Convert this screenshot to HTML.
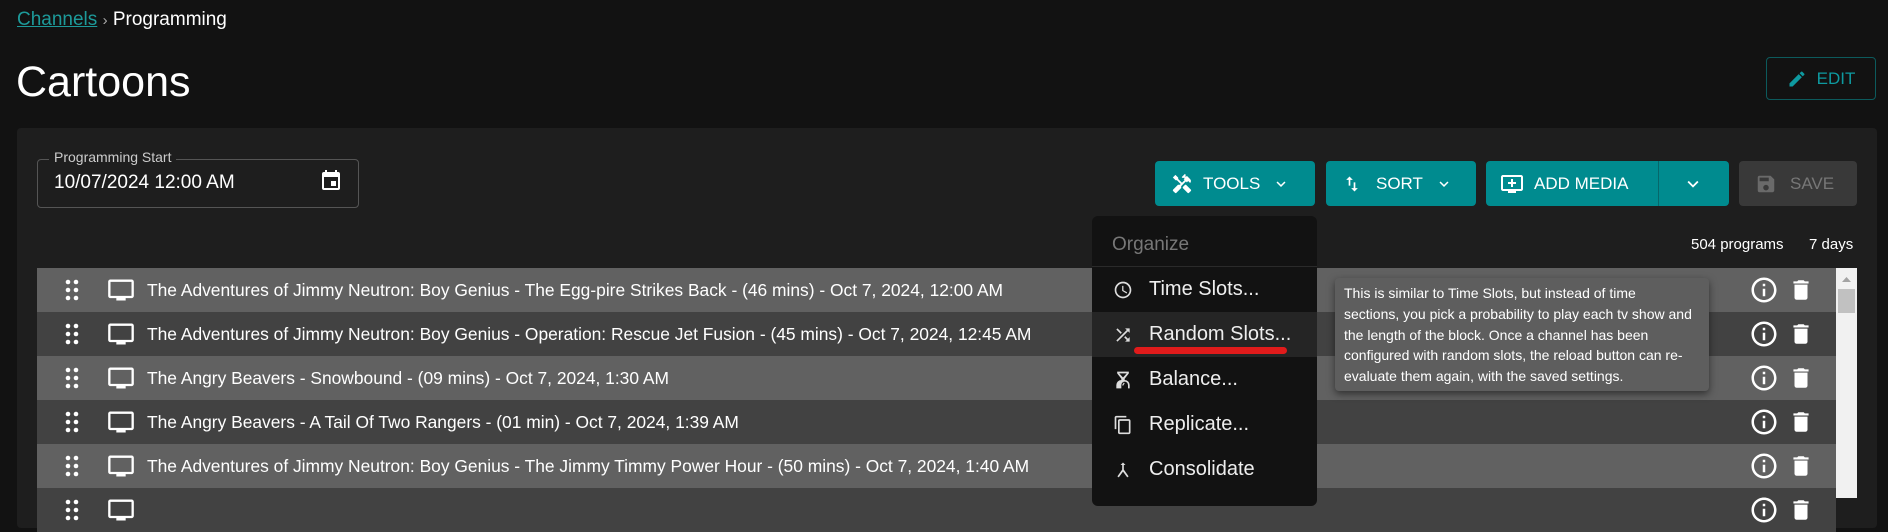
<!DOCTYPE html>
<html><head><meta charset="utf-8"><style>
*{box-sizing:border-box;margin:0;padding:0}
body{width:1888px;height:498px;background:#121212;font-family:"Liberation Sans",Arial,sans-serif;color:#fff;position:relative;overflow:hidden}
.abs{position:absolute}
.crumb{left:17px;top:9px;font-size:19px}
.crumb a{color:#1d9a9a;text-decoration:underline}
.title{left:16px;top:58px;font-size:43px}
.edit{left:1766px;top:57px;width:110px;height:43px;border:1px solid #0c5a5c;border-radius:4px;color:#0e9aa0;font-size:17px;display:flex;align-items:center;justify-content:center;gap:10px}
.panel{left:17px;top:128px;width:1860px;height:400px;background:#1e1e1e;border-radius:4px}
.field{left:37px;top:159px;width:322px;height:49px;border:1px solid #555;border-radius:4px}
.flabel{left:49px;top:149px;font-size:14px;color:#ccc;background:#1e1e1e;padding:0 5px}
.fval{left:54px;top:172px;font-size:19px}
.btn{top:161px;height:45px;background:#008b8f;border-radius:4px;display:flex;align-items:center;font-size:17px;font-weight:normal;color:#fff}
.row{left:37px;width:1799px;height:44px;display:flex;align-items:center;font-size:17.4px}
.l{background:#616161}.d{background:#424242}
.menu{left:1092px;top:216px;width:225px;height:290px;background:#121212;border-radius:6px}
.mi{position:absolute;left:0;width:225px;height:45px;display:flex;align-items:center;font-size:20px;color:#eee}
.mi svg{position:absolute;left:21px}
.mi span{position:absolute;left:57px}
.tip{left:1335px;top:278px;width:374px;height:113px;background:#5e5e5e;border-radius:4px;box-shadow:0 3px 8px rgba(0,0,0,.5);font-size:14px;line-height:20.8px;padding:5px 6px 0 9px;color:#fff;white-space:nowrap}
</style></head><body>
<div class="abs crumb"><a>Channels</a> <span style="color:#aaa;font-size:15px">›</span> Programming</div>
<div class="abs title">Cartoons</div>
<div class="abs edit"><svg width="20" height="20" viewBox="0 0 24 24"><path fill="#0e9aa0" d="M3 17.25V21h3.75L17.81 9.94l-3.75-3.75L3 17.25zM20.71 7.04a1 1 0 000-1.41l-2.34-2.34a1 1 0 00-1.41 0l-1.83 1.83 3.75 3.75 1.83-1.83z"/></svg>EDIT</div>
<div class="abs panel"></div>
<div class="abs field"></div>
<div class="abs flabel">Programming Start</div>
<div class="abs fval">10/07/2024 12:00 AM</div>
<svg class="abs" style="left:319px;top:169px" width="24" height="24" viewBox="0 0 24 24"><path fill="#fff" d="M17 12h-5v5h5v-5zM16 1v2H8V1H6v2H5a2 2 0 00-2 2v14a2 2 0 002 2h14a2 2 0 002-2V5a2 2 0 00-2-2h-1V1h-2zm3 18H5V8h14v11z"/></svg>

<div class="abs btn" style="left:1155px;width:160px"><svg style="margin-left:16px" width="22" height="22" viewBox="0 0 24 24"><path fill="#fff" d="M21.67 18.17l-5.3-5.3h-.99l-2.54 2.54v.99l5.3 5.3c.39.39 1.02.39 1.41 0l2.12-2.12c.39-.38.39-1.02 0-1.41zM17.34 10.19l1.41-1.41 2.12 2.12a3 3 0 000-4.24l-3.54-3.54-1.41 1.41V1.71l-.7-.71-3.54 3.54.71.71h2.83l-1.41 1.41 1.06 1.06-2.89 2.89-4.13-4.13V5.06L4.83 2.04 2 4.87 5.03 7.9h1.41l4.13 4.13-.85.85H7.6l-5.3 5.3a1 1 0 000 1.41l2.12 2.12c.39.39 1.02.39 1.41 0l5.3-5.3v-2.12l5.15-5.15 1.06 1.05z"/></svg><span style="margin-left:10px">TOOLS</span><svg style="margin-left:12px" width="18" height="18" viewBox="0 0 24 24"><path fill="#fff" d="M7.41 8.59L12 13.17l4.59-4.58L18 10l-6 6-6-6z"/></svg></div>
<div class="abs btn" style="left:1326px;width:150px"><svg style="margin-left:16px" width="20" height="22" viewBox="0 0 24 24"><path fill="#fff" d="M16 17.01V10h-2v7.01h-3L15 21l4-3.99h-3zM9 3L5 6.99h3V14h2V6.99h3L9 3z"/></svg><span style="margin-left:14px">SORT</span><svg style="margin-left:12px" width="18" height="18" viewBox="0 0 24 24"><path fill="#fff" d="M7.41 8.59L12 13.17l4.59-4.58L18 10l-6 6-6-6z"/></svg></div>
<div class="abs btn" style="left:1486px;width:243px"><svg style="margin-left:14px" width="24" height="24" viewBox="0 0 24 24"><path fill="#fff" d="M21 3H3c-1.1 0-2 .9-2 2v12c0 1.1.9 2 2 2h5v2h8v-2h5c1.1 0 2-.9 2-2V5c0-1.1-.9-2-2-2zm0 14H3V5h18v12zm-5-7v2h-3v3h-2v-3H8v-2h3V7h2v3h3z"/></svg><span style="margin-left:10px">ADD MEDIA</span><div style="position:absolute;left:172px;top:0;width:1px;height:45px;background:#06676a"></div><svg style="position:absolute;left:196px" width="22" height="22" viewBox="0 0 24 24"><path fill="#fff" d="M7.41 8.59L12 13.17l4.59-4.58L18 10l-6 6-6-6z"/></svg></div>
<div class="abs btn" style="left:1739px;width:118px;background:#393939;color:#777"><svg style="margin-left:16px" width="22" height="22" viewBox="0 0 24 24"><path fill="#6a6a6a" d="M17 3H5a2 2 0 00-2 2v14a2 2 0 002 2h14c1.1 0 2-.9 2-2V7l-4-4zm-5 16c-1.66 0-3-1.34-3-3s1.34-3 3-3 3 1.34 3 3-1.34 3-3 3zm3-10H5V5h10v4z"/></svg><span style="margin-left:13px">SAVE</span></div>

<div class="abs" style="left:1691px;top:236px;font-size:15px">504 programs</div>
<div class="abs" style="left:1809px;top:236px;font-size:15px">7 days</div>

<div class="abs row l" style="top:268px"></div>
<div class="abs row d" style="top:312px"></div>
<div class="abs row l" style="top:356px"></div>
<div class="abs row d" style="top:400px"></div>
<div class="abs row l" style="top:444px"></div>
<div class="abs row d" style="top:488px"></div>
<div class="abs" style="left:1836px;top:268px;width:21px;height:230px;background:#f1f1f1"></div>
<div class="abs" style="left:1838px;top:289px;width:17px;height:24px;background:#c1c1c1"></div>
<svg class="abs" style="left:1841px;top:276px" width="11" height="7"><path d="M1 6L5.5 1 10 6z" fill="#a3a3a3"/></svg>

<div class="abs" style="left:37px;top:268px;width:1799px">
<script>
var t=["The Adventures of Jimmy Neutron: Boy Genius - The Egg-pire Strikes Back - (46 mins) - Oct 7, 2024, 12:00 AM","The Adventures of Jimmy Neutron: Boy Genius - Operation: Rescue Jet Fusion - (45 mins) - Oct 7, 2024, 12:45 AM","The Angry Beavers - Snowbound - (09 mins) - Oct 7, 2024, 1:30 AM","The Angry Beavers - A Tail Of Two Rangers - (01 min) - Oct 7, 2024, 1:39 AM","The Adventures of Jimmy Neutron: Boy Genius - The Jimmy Timmy Power Hour - (50 mins) - Oct 7, 2024, 1:40 AM",""];
for(var i=0;i<6;i++){var y=i*44;document.write('<div style="position:absolute;top:'+y+'px;left:0;width:1799px;height:44px">'+
'<svg style="position:absolute;left:28px;top:10px" width="14" height="24" viewBox="0 0 14 24"><g fill="#fff"><circle cx="3" cy="4" r="2.3"/><circle cx="11" cy="4" r="2.3"/><circle cx="3" cy="12" r="2.3"/><circle cx="11" cy="12" r="2.3"/><circle cx="3" cy="20" r="2.3"/><circle cx="11" cy="20" r="2.3"/></g></svg>'+
'<svg style="position:absolute;left:69px;top:8px" width="30" height="28" viewBox="0 0 24 24"><path fill="#fff" d="M21 3H3c-1.1 0-2 .9-2 2v12c0 1.1.9 2 2 2h5v2h8v-2h5c1.1 0 2-.9 2-2V5c0-1.1-.9-2-2-2zm0 14H3V5h18v12z"/></svg>'+
'<div style="position:absolute;left:110px;top:12px;font-size:17.4px;white-space:nowrap">'+t[i]+'</div>'+
'<svg style="position:absolute;left:1712px;top:7px" width="30" height="30" viewBox="0 0 24 24"><path fill="#fff" d="M11 7h2v2h-2zm0 4h2v6h-2zm1-9C6.48 2 2 6.48 2 12s4.48 10 10 10 10-4.48 10-10S17.52 2 12 2zm0 18c-4.41 0-8-3.59-8-8s3.59-8 8-8 8 3.590 8 8-3.59 8-8 8z"/></svg>'+
'<svg style="position:absolute;left:1751px;top:9px" width="26" height="26" viewBox="0 0 24 24"><path fill="#fff" d="M6 19c0 1.1.9 2 2 2h8c1.1 0 2-.9 2-2V7H6v12zM19 4h-3.5l-1-1h-5l-1 1H5v2h14V4z"/></svg></div>');}
</script>
</div>

<div class="abs menu">
<div style="position:absolute;left:20px;top:18px;font-size:19px;color:#777">Organize</div>
<div style="position:absolute;left:0;top:50px;width:225px;height:1px;background:#2a2a2a"></div>
<div class="mi" style="top:51px"><svg width="20" height="20" viewBox="0 0 24 24"><path fill="#ddd" d="M11.99 2C6.47 2 2 6.48 2 12s4.47 10 9.99 10C17.52 22 22 17.52 22 12S17.52 2 11.99 2zM12 20c-4.42 0-8-3.58-8-8s3.58-8 8-8 8 3.58 8 8-3.58 8-8 8zm.5-13H11v6l5.25 3.15.75-1.23-4.5-2.67z"/></svg><span>Time Slots...</span></div>
<div class="mi" style="top:96px;background:#252525"><svg width="20" height="20" viewBox="0 0 24 24"><path fill="#ddd" d="M10.59 9.17L5.41 4 4 5.41l5.17 5.17 1.42-1.41zM14.5 4l2.04 2.04L4 18.59 5.41 20 17.96 7.46 20 9.5V4h-5.5zm.33 9.41l-1.41 1.41 3.13 3.13L14.5 20H20v-5.5l-2.04 2.04-3.13-3.13z"/></svg><span>Random Slots...</span></div>
<div style="position:absolute;left:42px;top:131px;width:153px;height:7px;background:#e01b1b;border-radius:4px"></div>
<div class="mi" style="top:141px"><svg width="20" height="22" viewBox="0 0 24 24"><path fill="#ddd" d="M5 2h14v2l-5 6.5V12a6 6 0 016 6v4h-2v-4a4 4 0 00-8 0v4H4v-4a6 6 0 016-6v-1.5L5 4V2zm2.5 2L12 9l4.5-5h-9zM11 18l2-3 1 1-2 3z"/></svg><span>Balance...</span></div>
<div class="mi" style="top:186px"><svg width="20" height="22" viewBox="0 0 24 24"><path fill="#ddd" d="M16 1H4c-1.1 0-2 .9-2 2v14h2V3h12V1zm3 4H8c-1.1 0-2 .9-2 2v14c0 1.1.9 2 2 2h11c1.1 0 2-.9 2-2V7c0-1.1-.9-2-2-2zm0 16H8V7h11v14z"/></svg><span>Replicate...</span></div>
<div class="mi" style="top:231px"><svg width="20" height="20" viewBox="0 0 24 24"><path fill="#ddd" d="M12 3l-3 3h2v5.5L5.3 19.6l1.6 1.2L12 14l5.1 6.8 1.6-1.2L13 11.5V6h2z"/></svg><span>Consolidate</span></div>
</div>

<div class="abs tip">This is similar to Time Slots, but instead of time<br>sections, you pick a probability to play each tv show and<br>the length of the block. Once a channel has been<br>configured with random slots, the reload button can re-<br>evaluate them again, with the saved settings.</div>
</body></html>
